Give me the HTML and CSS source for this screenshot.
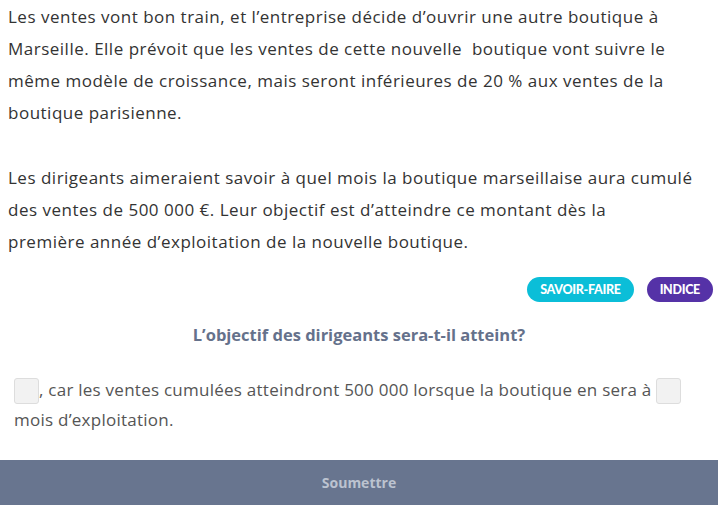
FILE: index.html
```html
<!DOCTYPE html>
<html lang="fr">
<head>
<meta charset="utf-8">
<link rel="stylesheet" href="styles.css">
</head>
<body>
<div class="page">
  <p class="para">Les ventes vont bon train, et l’entreprise décide d’ouvrir une autre boutique à Marseille. Elle prévoit que les ventes de cette nouvelle&nbsp; boutique vont suivre le même modèle de croissance, mais seront inférieures de 20&nbsp;% aux ventes de la boutique parisienne.</p>
  <p class="para second">Les dirigeants aimeraient savoir à quel mois la boutique marseillaise aura cumulé des ventes de 500&nbsp;000&nbsp;€. Leur objectif est d’atteindre ce montant dès la<br>première année d’exploitation de la nouvelle boutique.</p>
  <div class="tags">
    <span class="tag tag-skill">SAVOIR-FAIRE</span>
    <span class="tag tag-hint">INDICE</span>
  </div>
  <h2 class="question">L’objectif des dirigeants sera-t-il atteint?</h2>
  <div class="answer"><span class="blank"></span>, car les ventes cumulées atteindront 500 000 lorsque la boutique en sera à <span class="blank"></span> mois d’exploitation.</div>
</div>
<div class="submit">Soumettre</div>
</body>
</html>
```
FILE: styles.css
```css
html, body { margin: 0; padding: 0; background: #fff; }
body { font-family: "Open Sans", Lato, sans-serif; color: #333; width: 718px; }
.page { padding: 0 8px; }
.para { margin: 0; font-size: 17px; line-height: 32px; padding-top: 1px; letter-spacing: 0.5px; }
.para.second { margin-top: 32px; }
.tags { display: flex; justify-content: flex-end; gap: 13px; margin: 19px -3px 0 0; }
.tag { display: inline-flex; align-items: center; height: 25px; padding: 0 13px; border-radius: 13px; color: #fff; font-family: Lato, sans-serif; font-weight: 900; font-size: 12.5px; letter-spacing: -0.3px; }
.tag-skill { background: #0bbed8; }
.tag-hint { background: #5532a7; }
.question { margin: 21px 0 0; text-align: center; font-size: 16.5px; font-weight: 700; color: #65718b; }
.answer { margin-top: 29px; padding-left: 6px; font-size: 17px; line-height: 30px; color: #555; letter-spacing: 0.25px; }
.blank { display: inline-block; width: 23px; height: 24px; vertical-align: middle; background: #f2f2f2; border: 1px solid #ddd; border-radius: 3px; }
.submit { margin-top: 25px; height: 45px; display: flex; align-items: center; justify-content: center; background: #68758f; color: #bcc3d0; font-weight: 700; font-size: 14px; }
```
